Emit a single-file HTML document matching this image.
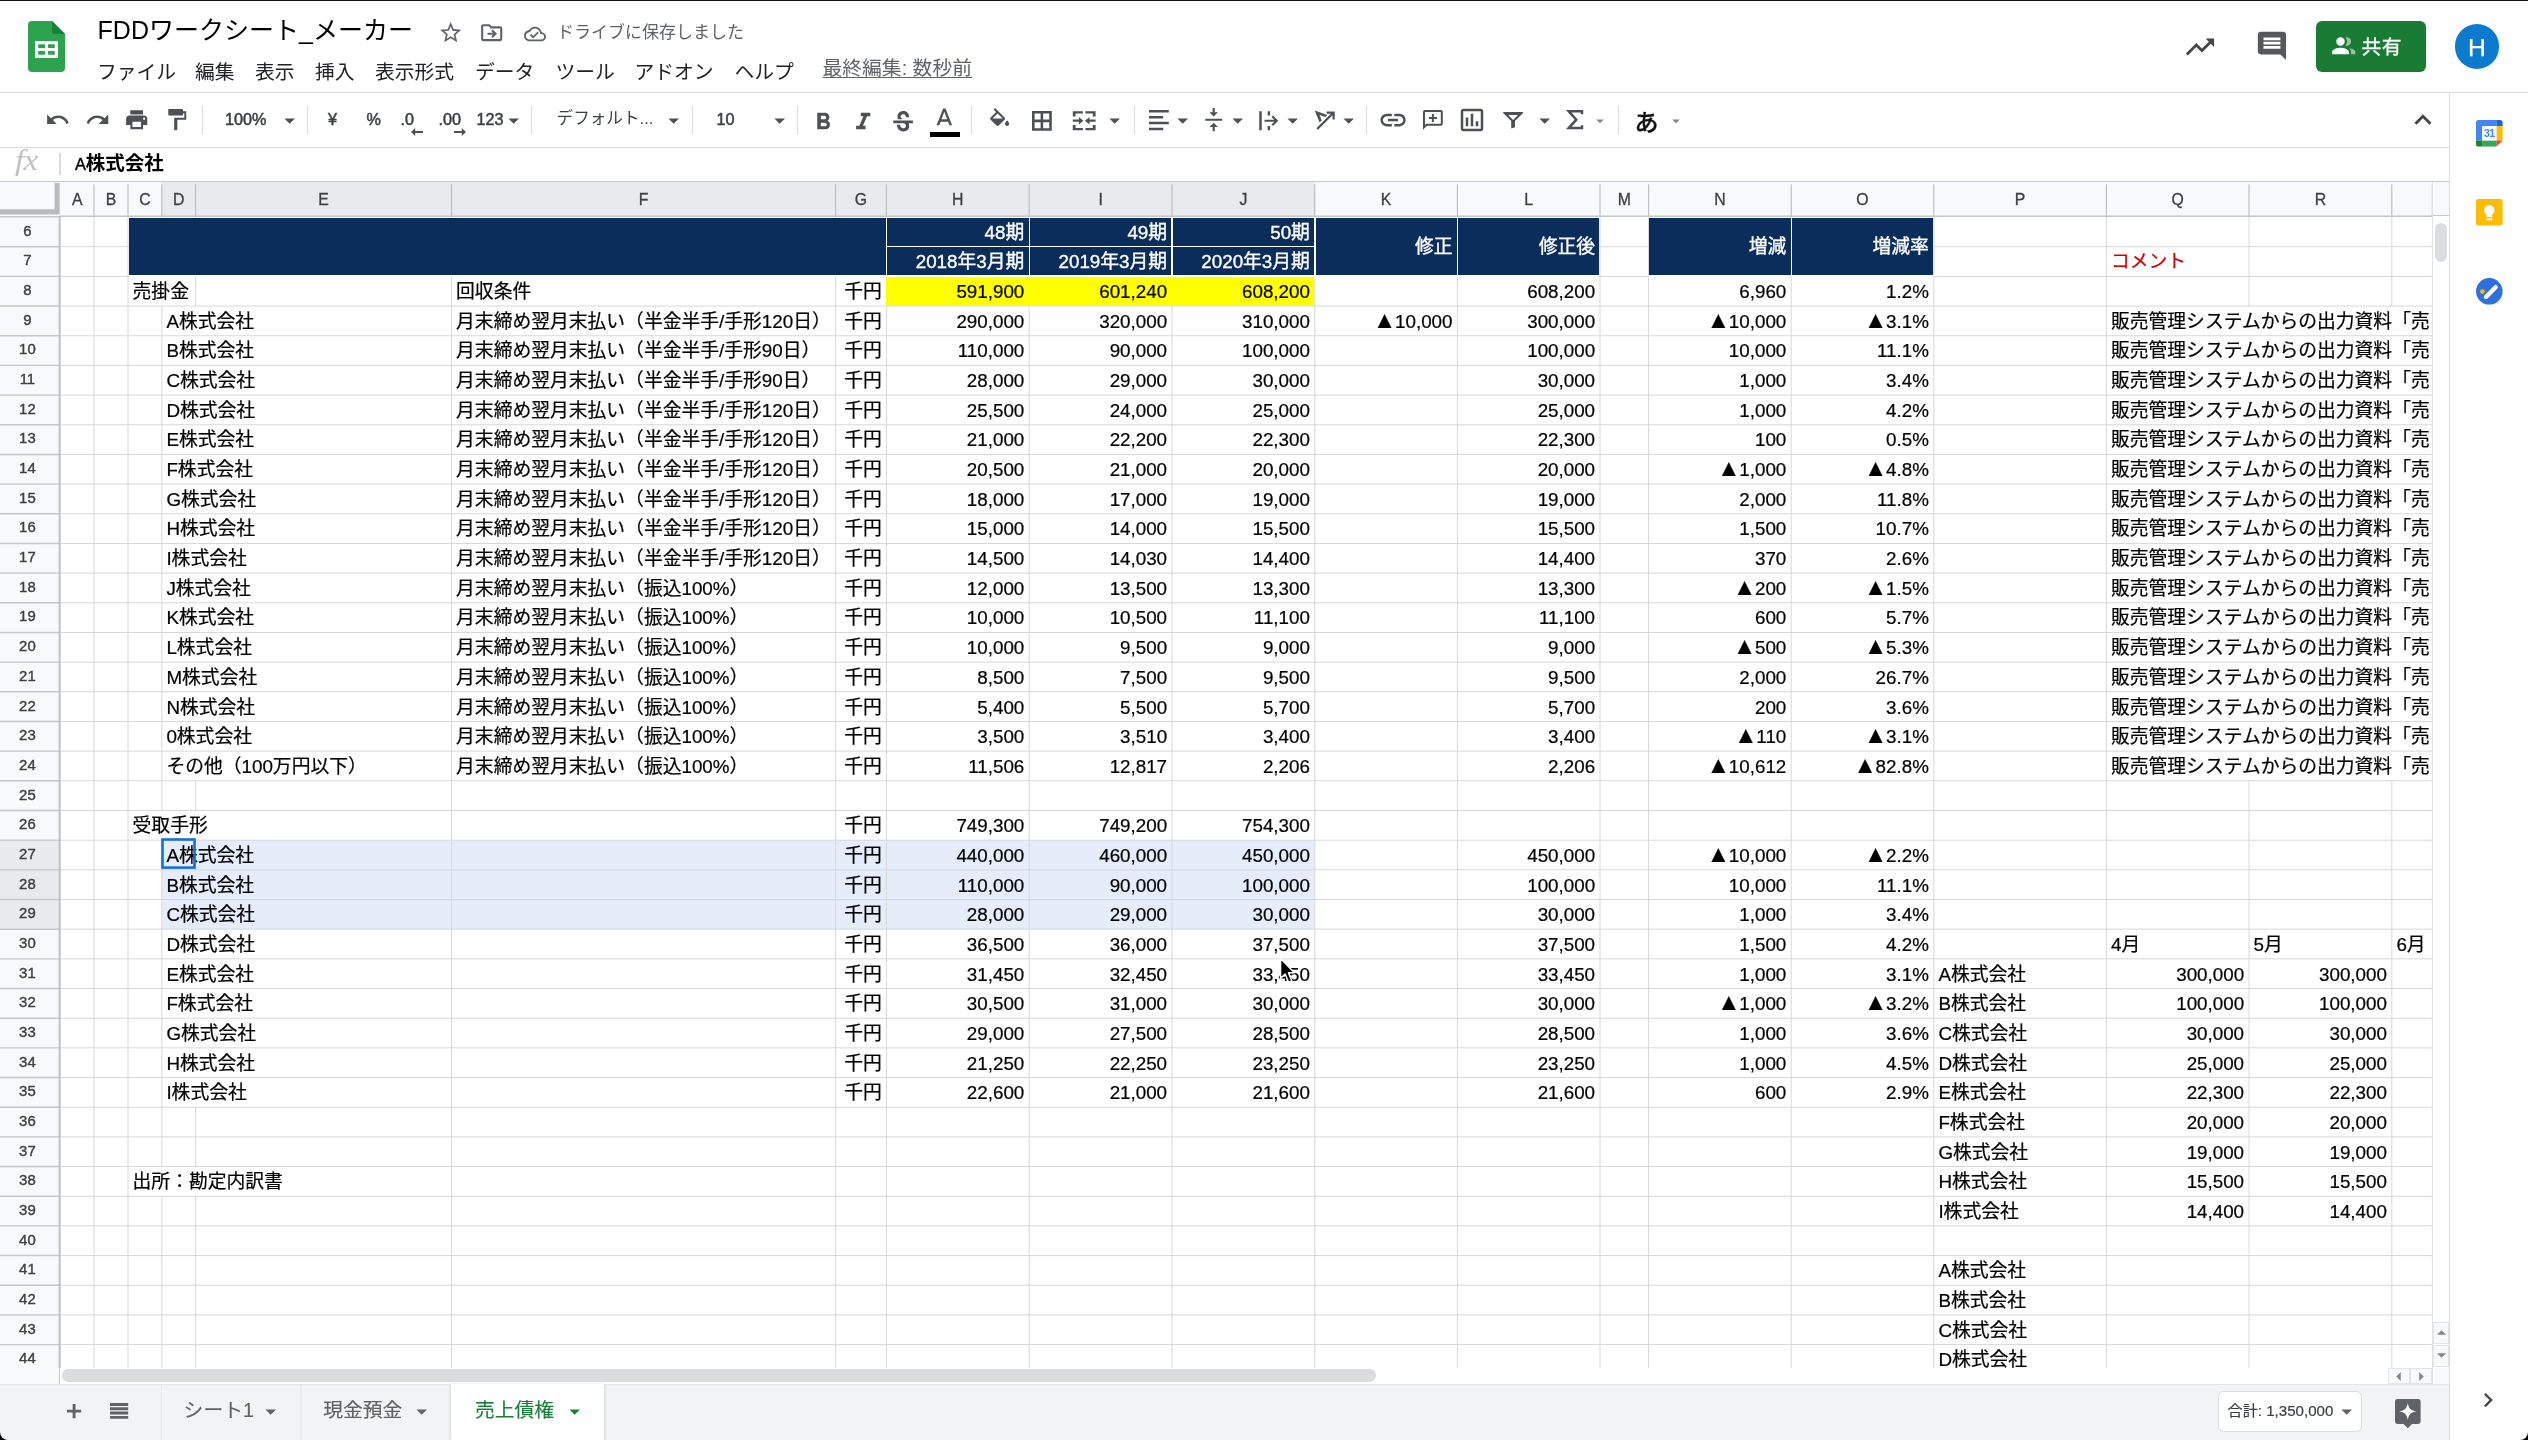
<!DOCTYPE html>
<html lang="ja"><head><meta charset="utf-8"><title>FDDワークシート_メーカー - Google スプレッドシート</title>
<style>
*{box-sizing:border-box;margin:0;padding:0}
html,body{width:2528px;height:1440px;overflow:hidden;background:#fff}
body{position:relative;font-family:"Liberation Sans","Noto Sans CJK JP",sans-serif;color:#000}
.abs,.c,.rh,.ch,.tb,.ic{position:absolute}
.c{white-space:nowrap;font-size:18.8px;line-height:29.66px;height:29.66px;overflow:hidden;-webkit-text-stroke:.22px currentColor}
.r{text-align:right}
.b{font-weight:bold}
.wh{color:#fff;-webkit-text-stroke:.35px #fff}
.t{font-size:23.4px;line-height:0;letter-spacing:-1.1px}
.md{-webkit-text-stroke:.45px currentColor}
.rh{left:0;width:54.8px;text-align:center;font-size:14.9px;color:#3c4043;-webkit-text-stroke:.38px #3c4043;line-height:29.66px;height:29.66px}
.ch{top:183.4px;height:33px;line-height:34px;text-align:center;font-size:15.8px;color:#3c4043;-webkit-text-stroke:.3px #3c4043}
.tb{font-size:16.2px;color:#3c4043;-webkit-text-stroke:.5px #3c4043;white-space:nowrap;line-height:24px;height:24px}
.sep{position:absolute;top:106px;height:28px;width:1.4px;background:#dadce0}
.menu{position:absolute;top:57.5px;font-size:19.8px;line-height:28px;color:#202124;white-space:nowrap}
svg{position:absolute;overflow:visible}
#app{position:absolute;left:0;top:0;width:2528px;height:1440px;will-change:transform}
</style></head><body><div id="app">
<div class="abs" style="left:0;top:0;width:2528px;height:1.4px;background:#111"></div>
<div class="abs" style="left:0;top:91.6px;width:2528px;height:1.4px;background:#dadce0"></div>
<svg style="left:28px;top:21px" width="37" height="51" viewBox="0 0 37 51"><path d="M4 0 H24 L37 13 V47 a4 4 0 0 1 -4 4 H4 a4 4 0 0 1 -4 -4 V4 a4 4 0 0 1 4 -4z" fill="#2da350"/><path d="M24 0 L37 13 H27 a3 3 0 0 1 -3 -3z" fill="#188038"/><path d="M7 20 H30 V37 H7z M10.2 23.2 V27 H17 V23.2z M20 23.2 V27 H26.8 V23.2z M10.2 30 V33.8 H17 V30z M20 30 V33.8 H26.8 V30z" fill="#fff" fill-rule="evenodd"/></svg>
<div class="abs" style="left:97.6px;top:12px;font-size:25px;line-height:36px;color:#000;white-space:nowrap">FDDワークシート_メーカー</div>
<svg style="left:437.80px;top:19.80px" width="25.40" height="25.40" viewBox="0 0 24 24"><path d="M22 9.24l-7.19-.62L12 2 9.19 8.63 2 9.24l5.46 4.73L5.82 21 12 17.27 18.18 21l-1.63-7.03L22 9.24zM12 15.4l-3.76 2.27 1-4.28-3.32-2.88 4.38-.38L12 6.1l1.71 4.04 4.38.38-3.32 2.88 1 4.28L12 15.4z" fill="#5f6368"/></svg>
<svg style="left:479.30px;top:19.80px" width="25.40" height="25.40" viewBox="0 0 24 24"><path d="M20 6h-8l-2-2H4c-1.1 0-2 .9-2 2v12c0 1.1.9 2 2 2h16c1.1 0 2-.9 2-2V8c0-1.1-.9-2-2-2zm0 12H4V6h5.17l2 2H20v10zM8 12v2h5.2l-1.6 1.6L13 17l4-4-4-4-1.4 1.4 1.6 1.6H8z" fill="#5f6368"/></svg>
<svg style="left:524.40px;top:22.60px" width="22.00" height="22.00" viewBox="0 0 24 24"><path d="M19.35 10.04C18.67 6.59 15.64 4 12 4 9.11 4 6.6 5.64 5.35 8.04 2.34 8.36 0 10.91 0 14c0 3.31 2.69 6 6 6h13c2.76 0 5-2.24 5-5 0-2.64-2.05-4.78-4.65-4.96zM19 18H6c-2.21 0-4-1.79-4-4 0-2.05 1.53-3.76 3.56-3.97l1.07-.11.5-.95C8.08 7.14 9.94 6 12 6c2.62 0 4.88 1.86 5.39 4.43l.3 1.5 1.53.11c1.56.1 2.78 1.41 2.78 2.96 0 1.65-1.35 3-3 3zm-9-3.82l-2.09-2.09L6.5 13.5 10 17l6.01-6.01-1.41-1.41z" fill="#5f6368"/></svg>
<div class="abs" style="left:557px;top:21.4px;font-size:17px;line-height:24px;color:#5f6368;white-space:nowrap">ドライブに保存しました</div>
<div class="menu" style="left:96.9px">ファイル</div>
<div class="menu" style="left:195px">編集</div>
<div class="menu" style="left:255px">表示</div>
<div class="menu" style="left:315px">挿入</div>
<div class="menu" style="left:375px">表示形式</div>
<div class="menu" style="left:475px">データ</div>
<div class="menu" style="left:555.5px">ツール</div>
<div class="menu" style="left:634.5px">アドオン</div>
<div class="menu" style="left:734.5px">ヘルプ</div>
<div class="menu" style="left:822.5px;top:53.5px;color:#5f6368;text-decoration:underline;text-underline-offset:2px">最終編集: 数秒前</div>
<svg style="left:2183.25px;top:29.75px" width="33.90" height="33.90" viewBox="0 0 24 24"><path d="M16 6l2.29 2.29-4.88 4.88-4-4L2 16.59 3.41 18l6-6 4 4 6.3-6.29L22 12V6z" fill="#444746"/></svg>
<svg style="left:2255.25px;top:29.45px" width="33.90" height="33.90" viewBox="0 0 24 24"><path d="M21.99 4c0-1.1-.89-2-1.99-2H4c-1.1 0-2 .9-2 2v12c0 1.1.9 2 2 2h14l4 4-.01-18zM18 14H6v-2h12v2zm0-3H6V9h12v2zm0-3H6V6h12v2z" fill="#55585d"/></svg>
<div class="abs" style="left:2316.2px;top:21.2px;width:109.8px;height:50.4px;border-radius:6px;background:#1a7b34"></div>
<svg style="left:2330.80px;top:33.30px" width="25.40" height="25.40" viewBox="0 0 24 24"><path d="M9 12c2.21 0 4-1.79 4-4s-1.79-4-4-4-4 1.79-4 4 1.79 4 4 4zm0 2c-2.67 0-8 1.34-8 4v2h16v-2c0-2.66-5.33-4-8-4z" fill="#fff"/><path d="M15 12c2.21 0 4-1.79 4-4s-1.79-4-4-4c-.47 0-.91.1-1.33.24a5.98 5.98 0 0 1 0 7.52c.42.14.86.24 1.33.24zm2.1 2.36C18.27 15.31 19 16.5 19 18v2h4v-2c0-2.02-3.08-3.26-5.9-3.64z" fill="#fff" fill-opacity=".55"/></svg>
<div class="abs" style="left:2361.6px;top:32.7px;font-size:19.8px;line-height:28px;color:#fff;-webkit-text-stroke:.3px #fff;white-space:nowrap;letter-spacing:.3px">共有</div>
<div class="abs" style="left:2454.6px;top:24.2px;width:44.8px;height:44.8px;border-radius:50%;background:#0b7bd0"></div>
<div class="abs" style="left:2454.6px;top:24.2px;width:44.8px;height:44.8px;line-height:47.8px;text-align:center;font-size:24.6px;-webkit-text-stroke:.25px #fff;color:#fff">H</div>
<div class="abs" style="left:0;top:146.6px;width:2449px;height:1.4px;background:#dadce0"></div>
<div class="abs" style="left:0;top:180.8px;width:2449px;height:1.8px;background:#c4c7c5"></div>
<div class="sep" style="left:202px"></div>
<div class="sep" style="left:306.5px"></div>
<div class="sep" style="left:531.1px"></div>
<div class="sep" style="left:692.1px"></div>
<div class="sep" style="left:796.6px"></div>
<div class="sep" style="left:970.5px"></div>
<div class="sep" style="left:1133.6px"></div>
<div class="sep" style="left:1366.1px"></div>
<div class="sep" style="left:1617.9px"></div>
<svg style="left:44.50px;top:107.30px" width="25.40" height="25.40" viewBox="0 0 24 24"><path d="M12.5 8c-2.65 0-5.05.99-6.9 2.6L2 7v9h9l-3.62-3.62c1.39-1.16 3.16-1.88 5.12-1.88 3.54 0 6.55 2.31 7.6 5.5l2.37-.78C21.08 11.03 17.15 8 12.5 8z" fill="#4d5156"/></svg>
<svg style="left:85.30px;top:107.30px" width="25.40" height="25.40" viewBox="0 0 24 24"><path d="M18.4 10.6C16.55 8.99 14.15 8 11.5 8c-4.65 0-8.58 3.03-9.96 7.22L3.9 16c1.05-3.19 4.05-5.5 7.6-5.5 1.95 0 3.73.72 5.12 1.88L13 16h9V7l-3.6 3.6z" fill="#4d5156"/></svg>
<svg style="left:124.30px;top:107.30px" width="25.40" height="25.40" viewBox="0 0 24 24"><path d="M19 8H5c-1.66 0-3 1.34-3 3v6h4v4h12v-4h4v-6c0-1.66-1.34-3-3-3zm-3 11H8v-5h8v5zm3-7c-.55 0-1-.45-1-1s.45-1 1-1 1 .45 1 1-.45 1-1 1zm-1-9H6v4h12V3z" fill="#4d5156"/></svg>
<svg style="left:163.90px;top:107.30px" width="25.40" height="25.40" viewBox="0 0 24 24"><path d="M18 4V3c0-.55-.45-1-1-1H5c-.55 0-1 .45-1 1v4c0 .55.45 1 1 1h12c.55 0 1-.45 1-1V6h1.200v4.200H9.600V21c0 .55.45 1 1 1h1c.55 0 1-.45 1-1v-9H21V4h-3z" fill="#4d5156"/></svg>
<div class="tb" style="left:225px;top:107px">100%</div>
<svg style="left:276.80px;top:108.10px" width="25.40" height="25.40" viewBox="0 0 24 24"><path d="M7 10l5 5 5-5z" fill="#4d5156"/></svg>
<div class="tb" style="left:328px;top:107px">¥</div>
<div class="tb" style="left:366.6px;top:107px">%</div>
<div class="tb" style="left:400.5px;top:107px">.0</div>
<div class="tb" style="left:438.6px;top:107px">.00</div>
<svg style="left:411px;top:127.6px" width="12" height="8" viewBox="0 0 12 8"><path d="M4.2 0 L0 4 L4.2 8 V5 H12 V3 H4.2Z" fill="#4d5156"/></svg>
<svg style="left:453.6px;top:127.6px" width="12" height="8" viewBox="0 0 12 8"><path d="M7.8 0 L12 4 L7.8 8 V5 H0 V3 H7.8Z" fill="#4d5156"/></svg>
<div class="tb" style="left:476.6px;top:107px">123</div>
<svg style="left:500.50px;top:108.10px" width="25.40" height="25.40" viewBox="0 0 24 24"><path d="M7 10l5 5 5-5z" fill="#4d5156"/></svg>
<div class="tb" style="left:556.6px;top:107px;-webkit-text-stroke:0;font-size:16.6px">デフォルト...</div>
<svg style="left:661.30px;top:108.10px" width="25.40" height="25.40" viewBox="0 0 24 24"><path d="M7 10l5 5 5-5z" fill="#4d5156"/></svg>
<div class="tb" style="left:716.4px;top:107px">10</div>
<svg style="left:767.30px;top:108.10px" width="25.40" height="25.40" viewBox="0 0 24 24"><path d="M7 10l5 5 5-5z" fill="#4d5156"/></svg>
<svg style="left:808.80px;top:107.60px" width="28.40" height="28.40" viewBox="0 0 24 24"><path d="M15.6 10.79c.97-.67 1.65-1.77 1.65-2.79 0-2.26-1.75-4-4-4H7v14h7.04c2.09 0 3.71-1.7 3.71-3.79 0-1.52-.86-2.82-2.15-3.42zM10 6.5h3c.83 0 1.5.67 1.5 1.5s-.67 1.5-1.5 1.5h-3v-3zm3.5 9H10v-3h3.5c.83 0 1.5.67 1.5 1.5s-.67 1.5-1.5 1.5z" fill="#4d5156"/></svg>
<svg style="left:848.80px;top:107.60px" width="28.40" height="28.40" viewBox="0 0 24 24"><path d="M10 4v3h2.21l-3.42 8H6v3h8v-3h-2.21l3.42-8H18V4z" fill="#4d5156"/></svg>
<svg style="left:889.6px;top:107.2px" width="26.2" height="32.6" viewBox="0 0 24 24" preserveAspectRatio="none"><path d="M7.24 8.75c-.26-.48-.39-1.03-.39-1.67 0-.61.13-1.16.4-1.67.26-.5.63-.93 1.11-1.29.48-.35 1.05-.63 1.7-.83.66-.19 1.39-.29 2.18-.29.81 0 1.54.11 2.21.34.66.22 1.23.54 1.69.94.47.4.83.88 1.08 1.43.25.55.38 1.15.38 1.81h-3.01c0-.31-.05-.59-.15-.85-.09-.27-.24-.49-.44-.68-.2-.19-.45-.33-.75-.44-.3-.1-.66-.16-1.06-.16-.39 0-.74.04-1.03.13-.29.09-.53.21-.72.36-.19.16-.34.34-.44.55-.1.21-.15.43-.15.66 0 .48.25.88.74 1.21.38.25.77.48 1.41.7H7.39c-.05-.08-.11-.17-.15-.25zM21 12v-2H3v2h9.62c.18.07.4.14.55.2.37.17.66.34.87.51.21.17.35.36.43.57.07.2.11.43.11.69 0 .23-.05.45-.14.66-.09.2-.23.38-.42.53-.19.15-.42.26-.71.35-.29.08-.63.13-1.01.13-.43 0-.83-.04-1.18-.13s-.66-.23-.91-.42c-.25-.19-.45-.44-.59-.75-.14-.31-.25-.76-.25-1.21H6.4c0 .55.08 1.13.24 1.58.16.45.37.85.65 1.21.28.35.6.66.98.92.37.26.78.48 1.22.65.44.17.9.3 1.38.39.48.08.96.13 1.44.13.8 0 1.53-.09 2.18-.28s1.21-.45 1.67-.79c.46-.34.82-.77 1.07-1.27s.38-1.07.38-1.71c0-.6-.1-1.14-.31-1.61-.05-.11-.11-.23-.17-.33H21z" fill="#4d5156"/></svg>
<svg style="left:929.65px;top:105.45px" width="28.70" height="28.70" viewBox="0 0 24 24"><path d="M11 3L5.5 17h2.25l1.12-3h6.25l1.12 3h2.25L13 3h-2zm-1.38 9L12 5.67 14.38 12H9.62z" fill="#4d5156"/></svg>
<div class="abs" style="left:930px;top:131.6px;width:29.6px;height:5.4px;background:#000"></div>
<svg style="left:986.50px;top:107.90px" width="25.40" height="25.40" viewBox="0 0 24 24"><path d="M16.56 8.94L7.62 0 6.21 1.41l2.38 2.38-5.15 5.15c-.59.59-.59 1.54 0 2.12l5.5 5.5c.29.29.68.44 1.06.44s.77-.15 1.06-.44l5.5-5.5c.59-.58.59-1.53 0-2.12zM5.21 10L10 5.21 14.79 10H5.21zM19 11.5s-2 2.17-2 3.5c0 1.1.9 2 2 2s2-.9 2-2c0-1.33-2-3.5-2-3.5z" fill="#4d5156"/></svg>
<svg style="left:1031.5px;top:110.5px" width="19.8" height="19.8" viewBox="0 0 19.8 19.8"><path d="M1.3 1.3 H18.5 V18.5 H1.3 Z M9.9 1.3 V18.5 M1.3 9.9 H18.5" stroke="#4d5156" stroke-width="2.6" fill="none"/></svg>
<svg style="left:1068.6px;top:107.5px" width="30.4" height="25.4" viewBox="0 0 24 24" preserveAspectRatio="none"><path d="M3 3h8v2.2H5.2V8H3V3zm10 0h8v5h-2.2V5.2H13V3zM3 16h2.2v2.800H11V21H3v-5zm15.800 0H21v5h-8v-2.200h5.800V16zM3 10.900h4.800V8.400l3.600 3.600-3.600 3.600v-2.500H3v-2.200zm18 0v2.200h-4.800v2.500L12.600 12l3.600-3.600v2.500H21z" fill="#4d5156"/></svg>
<svg style="left:1102.30px;top:108.10px" width="25.40" height="25.40" viewBox="0 0 24 24"><path d="M7 10l5 5 5-5z" fill="#4d5156"/></svg>
<svg style="left:1148.8px;top:109.9px" width="20" height="20.2" viewBox="0 0 20 20.2"><path d="M0 1.250 H19.8 M0 7.150 H14.2 M0 13.050 H19.8 M0 18.950 H14.2" stroke="#4d5156" stroke-width="2.5" fill="none"/></svg>
<svg style="left:1169.80px;top:108.10px" width="25.40" height="25.40" viewBox="0 0 24 24"><path d="M7 10l5 5 5-5z" fill="#4d5156"/></svg>
<svg style="left:1201.30px;top:107.30px" width="25.40" height="25.40" viewBox="0 0 24 24"><path d="M8 19h3v4h2v-4h3l-4-4-4 4zm8-14h-3V1h-2v4H8l4 4 4-4zM4 11v2h16v-2H4z" fill="#4d5156"/></svg>
<svg style="left:1225.10px;top:108.10px" width="25.40" height="25.40" viewBox="0 0 24 24"><path d="M7 10l5 5 5-5z" fill="#4d5156"/></svg>
<svg style="left:1254.70px;top:107.50px" width="25.40" height="25.40" viewBox="0 0 24 24"><path d="M4 3h2.4v18H4V3zm8 0h2.2v4H12V3zm0 14h2.2v4H12v-4zM9 11h9.2l-2.6-2.6L17 7l5 5-5 5-1.4-1.4 2.6-2.6H9v-2z" fill="#4d5156"/></svg>
<svg style="left:1280.10px;top:108.10px" width="25.40" height="25.40" viewBox="0 0 24 24"><path d="M7 10l5 5 5-5z" fill="#4d5156"/></svg>
<svg style="left:1312.30px;top:107.30px" width="25.40" height="25.40" viewBox="0 0 24 24"><path d="M2.6 3.2l11.8 4.3-1.9 1.9L7.2 7.5l1.9 5.3-1.9 1.9L2.6 3.2zM5.6 21.6l-1.5-1.5L17.9 6.3h-4.1V4.2h7.7v7.7h-2.1V7.8L5.6 21.6z" fill="#4d5156"/></svg>
<svg style="left:1335.60px;top:108.10px" width="25.40" height="25.40" viewBox="0 0 24 24"><path d="M7 10l5 5 5-5z" fill="#4d5156"/></svg>
<svg style="left:1377.90px;top:104.90px" width="30.20" height="30.20" viewBox="0 0 24 24"><path d="M3.9 12c0-1.71 1.39-3.1 3.1-3.1h4V7H7c-2.76 0-5 2.24-5 5s2.24 5 5 5h4v-1.9H7c-1.71 0-3.1-1.39-3.1-3.1zM8 13h8v-2H8v2zm9-6h-4v1.9h4c1.71 0 3.1 1.39 3.1 3.1s-1.39 3.1-3.1 3.1h-4V17h4c2.76 0 5-2.24 5-5s-2.24-5-5-5z" fill="#4d5156"/></svg>
<svg style="left:1420.80px;top:107.90px" width="23.80" height="23.80" viewBox="0 0 24 24"><path d="M20 2H4c-1.1 0-2 .9-2 2v18l4-4h14c1.1 0 2-.9 2-2V4c0-1.1-.9-2-2-2zm0 14H5.17L4 17.17V4h16v12zM11 14h2v-3h3V9h-3V6h-2v3H8v2h3v3z" fill="#4d5156"/></svg>
<svg style="left:1457.30px;top:105.00px" width="30.00" height="30.00" viewBox="0 0 24 24"><path d="M9 17H7v-7h2v7zm4 0h-2V7h2v10zm4 0h-2v-4h2v4zm2 2H5V5h14v14zm0-16H5c-1.1 0-2 .9-2 2v14c0 1.1.9 2 2 2h14c1.1 0 2-.9 2-2V5c0-1.1-.9-2-2-2z" fill="#4d5156"/></svg>
<svg style="left:1503.2px;top:111.7px" width="20.2" height="16.4" viewBox="0 0 20.2 16.4"><path d="M0.6 0 H19.6 a.6 .6 0 0 1 .45 1 L12 9.1 V15.2 L8.2 16.4 V9.100 L0.150 1 A.6 .6 0 0 1 .6 0z M5.200 3 H15 L10.100 7.900z" fill="#4d5156" fill-rule="evenodd"/></svg>
<svg style="left:1531.70px;top:108.10px" width="25.40" height="25.40" viewBox="0 0 24 24"><path d="M7 10l5 5 5-5z" fill="#4d5156"/></svg>
<svg style="left:1567.2px;top:110.4px" width="16.2" height="19.4" viewBox="0 0 16.2 19.4"><path d="M15 4.200 V1.300 H1.700 L9.300 9.700 L1.700 18.100 H15 V15.200" stroke="#4d5156" stroke-width="2.5" fill="none" stroke-linejoin="miter"/></svg>
<svg style="left:1591.00px;top:111.80px" width="18.00" height="18.00" viewBox="0 0 24 24"><path d="M7 10l5 5 5-5z" fill="#80868b"/></svg>
<div class="abs" style="left:1634.6px;top:107.4px;font-size:24px;line-height:32px;font-weight:500;-webkit-text-stroke:.3px #111;color:#111">あ</div>
<svg style="left:1667.30px;top:111.80px" width="18.00" height="18.00" viewBox="0 0 24 24"><path d="M7 10l5 5 5-5z" fill="#80868b"/></svg>
<svg style="left:2406.05px;top:103.05px" width="33.90" height="33.90" viewBox="0 0 24 24"><path d="M12 8l-6 6 1.41 1.41L12 10.83l4.59 4.58L18 14z" fill="#444746"/></svg>
<div class="abs" style="left:14.6px;top:143.4px;font-family:'Liberation Serif',serif;font-style:italic;font-size:29.5px;line-height:34px;color:#bfc1c4;letter-spacing:-.6px;transform:scaleX(1.12);transform-origin:0 0">fx</div>
<div class="abs" style="left:59.4px;top:153px;width:1.4px;height:22px;background:#dadce0"></div>
<div class="abs" style="left:75px;top:148px;font-size:19.5px;line-height:30px;font-weight:bold;color:#000;white-space:nowrap"><span style="font-weight:normal;-webkit-text-stroke:.4px #000;font-size:16.4px;letter-spacing:-.2px">A</span>株式会社</div>
<div class="abs" style="left:0;top:182px;width:2449px;height:1186px;overflow:hidden">
<div class="abs" style="left:0;top:-182px;width:2449px;height:1440px">
<div class="abs" style="left:0;top:182px;width:2449px;height:34.6px;background:#f8f9fa"></div>
<div class="abs" style="left:161.8px;top:182px;width:1153px;height:34.6px;background:#e8eaed"></div>
<div class="abs" style="left:0;top:216px;width:60.4px;height:1168px;background:#f8f9fa"></div>
<div class="abs" style="left:0;top:840.16px;width:60.4px;height:89.02px;background:#e8eaed"></div>
<div class="abs" style="left:161.8px;top:840.16px;width:1153px;height:89.02px;background:#e5edfb"></div>
<svg style="left:0;top:0" width="2449" height="1440" viewBox="0 0 2449 1440">
<path d="M60.4 246.72 H2432.4 M60.4 276.39 H2432.4 M60.4 306.07 H2432.4 M60.4 335.74 H2432.4 M60.4 365.41 H2432.4 M60.4 395.08 H2432.4 M60.4 424.75 H2432.4 M60.4 454.43 H2432.4 M60.4 484.1 H2432.4 M60.4 513.77 H2432.4 M60.4 543.44 H2432.4 M60.4 573.11 H2432.4 M60.4 602.79 H2432.4 M60.4 632.46 H2432.4 M60.4 662.13 H2432.4 M60.4 691.8 H2432.4 M60.4 721.47 H2432.4 M60.4 751.15 H2432.4 M60.4 780.82 H2432.4 M60.4 810.49 H2432.4 M60.4 840.16 H2432.4 M60.4 869.83 H2432.4 M60.4 899.51 H2432.4 M60.4 929.18 H2432.4 M60.4 958.85 H2432.4 M60.4 988.52 H2432.4 M60.4 1018.19 H2432.4 M60.4 1047.87 H2432.4 M60.4 1077.54 H2432.4 M60.4 1107.21 H2432.4 M60.4 1136.88 H2432.4 M60.4 1166.55 H2432.4 M60.4 1196.23 H2432.4 M60.4 1225.9 H2432.4 M60.4 1255.57 H2432.4 M60.4 1285.24 H2432.4 M60.4 1314.91 H2432.4 M60.4 1344.59 H2432.4 M60.4 1374.26 H2432.4" stroke="#d7d8d9" stroke-width="1" fill="none"/>
<path d="M94 217.05 V1374.26 M128 217.05 V1374.26 M161.8 217.05 V276.39 M161.8 306.07 V810.49 M161.8 840.16 V1166.55 M161.8 1196.23 V1374.26 M195.6 217.05 V306.07 M195.6 780.82 V810.49 M195.6 1107.21 V1166.55 M195.6 1196.23 V1374.26 M451.5 217.05 V1374.26 M835.6 217.05 V1374.26 M886.4 217.05 V1374.26 M1029.2 217.05 V1374.26 M1172 217.05 V1374.26 M1314.8 217.05 V1374.26 M1457.4 217.05 V1374.26 M1600 217.05 V1374.26 M1648.6 217.05 V1374.26 M1791.2 217.05 V1374.26 M1933.8 217.05 V1374.26 M2106.4 217.05 V1374.26 M2249 217.05 V306.07 M2249 780.82 V1374.26 M2391.8 217.05 V306.07 M2391.8 780.82 V1374.26 M2432.4 217.05 V1374.26" stroke="#d7d8d9" stroke-width="1" fill="none"/>
</svg>
<div class="abs" style="left:128.7px;top:217.75px;width:1470.7px;height:59.39px;background:#fff"></div>
<div class="abs" style="left:1649.2px;top:217.75px;width:284px;height:59.39px;background:#fff"></div>
<div class="abs" style="left:886.4px;top:276.69px;width:427.9px;height:28.97px;background:#ffff00"></div>
<div class="abs" style="left:128.7px;top:217.75px;width:757.7px;height:57.74px;background:#0b2d5b"></div>
<div class="abs" style="left:887px;top:217.75px;width:141.65px;height:28.42px;background:#0b2d5b"></div>
<div class="abs" style="left:887px;top:247.27px;width:141.65px;height:28.22px;background:#0b2d5b"></div>
<div class="abs" style="left:1029.8px;top:217.75px;width:141.65px;height:28.42px;background:#0b2d5b"></div>
<div class="abs" style="left:1029.8px;top:247.27px;width:141.65px;height:28.22px;background:#0b2d5b"></div>
<div class="abs" style="left:1172.6px;top:217.75px;width:141.65px;height:28.42px;background:#0b2d5b"></div>
<div class="abs" style="left:1172.6px;top:247.27px;width:141.65px;height:28.22px;background:#0b2d5b"></div>
<div class="abs" style="left:1315.6px;top:217.75px;width:141.25px;height:57.74px;background:#0b2d5b"></div>
<div class="abs" style="left:1458px;top:217.75px;width:141.4px;height:57.74px;background:#0b2d5b"></div>
<div class="abs" style="left:1649.2px;top:217.75px;width:141.45px;height:57.74px;background:#0b2d5b"></div>
<div class="abs" style="left:1791.8px;top:217.75px;width:141.4px;height:57.74px;background:#0b2d5b"></div>
<svg style="left:0;top:0" width="2449" height="1440" viewBox="0 0 2449 1440">
<path d="M94 184.2 V216.4 M128 184.2 V216.4 M161.8 184.2 V216.4 M195.6 184.2 V216.4 M451.5 184.2 V216.4 M835.6 184.2 V216.4 M886.4 184.2 V216.4 M1029.2 184.2 V216.4 M1172 184.2 V216.4 M1314.8 184.2 V216.4 M1457.4 184.2 V216.4 M1600 184.2 V216.4 M1648.6 184.2 V216.4 M1791.2 184.2 V216.4 M1933.8 184.2 V216.4 M2106.4 184.2 V216.4 M2249 184.2 V216.4 M2391.8 184.2 V216.4 M2432.4 184.2 V216.4" stroke="#bbbdbf" stroke-width="1.15" fill="none"/>
<path d="M0 246.72 H59 M0 276.39 H59 M0 306.07 H59 M0 335.74 H59 M0 365.41 H59 M0 395.08 H59 M0 424.75 H59 M0 454.43 H59 M0 484.1 H59 M0 513.77 H59 M0 543.44 H59 M0 573.11 H59 M0 602.79 H59 M0 632.46 H59 M0 662.13 H59 M0 691.8 H59 M0 721.47 H59 M0 751.15 H59 M0 780.82 H59 M0 810.49 H59 M0 840.16 H59 M0 869.83 H59 M0 899.51 H59 M0 929.18 H59 M0 958.85 H59 M0 988.52 H59 M0 1018.19 H59 M0 1047.87 H59 M0 1077.54 H59 M0 1107.21 H59 M0 1136.88 H59 M0 1166.55 H59 M0 1196.23 H59 M0 1225.9 H59 M0 1255.57 H59 M0 1285.24 H59 M0 1314.91 H59 M0 1344.59 H59 M0 1374.26 H59" stroke="#c4c7c5" stroke-width="1.4" fill="none"/>
<path d="M60 216.3 H2432.4" stroke="#c4c7c5" stroke-width="1.4" fill="none"/>
<path d="M57.1 183 V214.5 M0 211.9 H59.6" stroke="#b9bbbe" stroke-width="5.1" fill="none"/>
<path d="M0 216.7 H60" stroke="#c4c7c5" stroke-width="1.4" fill="none"/>
<path d="M59.7 216 V1440" stroke="#bcbec1" stroke-width="1.9" fill="none"/>
</svg>
<div class="ch" style="left:60.4px;width:33.6px">A</div>
<div class="ch" style="left:94px;width:34px">B</div>
<div class="ch" style="left:128px;width:33.8px">C</div>
<div class="ch" style="left:161.8px;width:33.8px">D</div>
<div class="ch" style="left:195.6px;width:255.9px">E</div>
<div class="ch" style="left:451.5px;width:384.1px">F</div>
<div class="ch" style="left:835.6px;width:50.8px">G</div>
<div class="ch" style="left:886.4px;width:142.8px">H</div>
<div class="ch" style="left:1029.2px;width:142.8px">I</div>
<div class="ch" style="left:1172px;width:142.8px">J</div>
<div class="ch" style="left:1314.8px;width:142.6px">K</div>
<div class="ch" style="left:1457.4px;width:142.6px">L</div>
<div class="ch" style="left:1600px;width:48.6px">M</div>
<div class="ch" style="left:1648.6px;width:142.6px">N</div>
<div class="ch" style="left:1791.2px;width:142.6px">O</div>
<div class="ch" style="left:1933.8px;width:172.6px">P</div>
<div class="ch" style="left:2106.4px;width:142.6px">Q</div>
<div class="ch" style="left:2249px;width:142.8px">R</div>
<div class="rh" style="top:216.75px">6</div>
<div class="rh" style="top:246.42px">7</div>
<div class="rh" style="top:276.09px">8</div>
<div class="rh" style="top:305.77px">9</div>
<div class="rh" style="top:335.44px">10</div>
<div class="rh" style="top:365.11px">11</div>
<div class="rh" style="top:394.78px">12</div>
<div class="rh" style="top:424.45px">13</div>
<div class="rh" style="top:454.13px">14</div>
<div class="rh" style="top:483.8px">15</div>
<div class="rh" style="top:513.47px">16</div>
<div class="rh" style="top:543.14px">17</div>
<div class="rh" style="top:572.81px">18</div>
<div class="rh" style="top:602.49px">19</div>
<div class="rh" style="top:632.16px">20</div>
<div class="rh" style="top:661.83px">21</div>
<div class="rh" style="top:691.5px">22</div>
<div class="rh" style="top:721.17px">23</div>
<div class="rh" style="top:750.85px">24</div>
<div class="rh" style="top:780.52px">25</div>
<div class="rh" style="top:810.19px">26</div>
<div class="rh" style="top:839.86px">27</div>
<div class="rh" style="top:869.53px">28</div>
<div class="rh" style="top:899.21px">29</div>
<div class="rh" style="top:928.88px">30</div>
<div class="rh" style="top:958.55px">31</div>
<div class="rh" style="top:988.22px">32</div>
<div class="rh" style="top:1017.89px">33</div>
<div class="rh" style="top:1047.57px">34</div>
<div class="rh" style="top:1077.24px">35</div>
<div class="rh" style="top:1106.91px">36</div>
<div class="rh" style="top:1136.58px">37</div>
<div class="rh" style="top:1166.25px">38</div>
<div class="rh" style="top:1195.93px">39</div>
<div class="rh" style="top:1225.6px">40</div>
<div class="rh" style="top:1255.27px">41</div>
<div class="rh" style="top:1284.94px">42</div>
<div class="rh" style="top:1314.61px">43</div>
<div class="rh" style="top:1344.29px">44</div>
<div class="c r wh" style="left:886.4px;top:217.75px;width:137.9px">48期</div>
<div class="c r wh" style="left:1029.2px;top:217.75px;width:137.9px">49期</div>
<div class="c r wh" style="left:1172px;top:217.75px;width:137.9px">50期</div>
<div class="c r wh" style="left:886.4px;top:247.42px;width:137.9px">2018年3月期</div>
<div class="c r wh" style="left:1029.2px;top:247.42px;width:137.9px">2019年3月期</div>
<div class="c r wh" style="left:1172px;top:247.42px;width:137.9px">2020年3月期</div>
<div class="c r wh" style="left:1314.8px;top:231.59px;width:137.7px">修正</div>
<div class="c r wh" style="left:1457.4px;top:231.59px;width:137.7px">修正後</div>
<div class="c r wh" style="left:1648.6px;top:231.59px;width:137.7px">増減</div>
<div class="c r wh" style="left:1791.2px;top:231.59px;width:137.7px">増減率</div>
<div class="c" style="left:2111px;top:247.42px;width:137px;color:#cc0000">コメント</div>
<div class="c" style="left:132.6px;top:277.09px;width:62px">売掛金</div>
<div class="c" style="left:456.1px;top:277.09px;width:378.5px">回収条件</div>
<div class="c" style="left:840.2px;top:277.09px;width:45.2px;left:844.2px">千円</div>
<div class="c r" style="left:886.4px;top:277.09px;width:137.9px">591,900</div>
<div class="c r" style="left:1029.2px;top:277.09px;width:137.9px">601,240</div>
<div class="c r" style="left:1172px;top:277.09px;width:137.9px">608,200</div>
<div class="c r" style="left:1457.4px;top:277.09px;width:137.7px">608,200</div>
<div class="c r" style="left:1648.6px;top:277.09px;width:137.7px">6,960</div>
<div class="c r" style="left:1791.2px;top:277.09px;width:137.7px">1.2%</div>
<div class="c" style="left:166.4px;top:306.77px;width:284.1px">A株式会社</div>
<div class="c" style="left:456.1px;top:306.77px;width:378.5px">月末締め翌月末払い（半金半手/手形120日）</div>
<div class="c" style="left:840.2px;top:306.77px;width:45.2px;left:844.2px">千円</div>
<div class="c r" style="left:886.4px;top:306.77px;width:137.9px">290,000</div>
<div class="c r" style="left:1029.2px;top:306.77px;width:137.9px">320,000</div>
<div class="c r" style="left:1172px;top:306.77px;width:137.9px">310,000</div>
<div class="c r" style="left:1314.8px;top:306.77px;width:137.7px"><span class="t">▲</span>10,000</div>
<div class="c r" style="left:1457.4px;top:306.77px;width:137.7px">300,000</div>
<div class="c r" style="left:1648.6px;top:306.77px;width:137.7px"><span class="t">▲</span>10,000</div>
<div class="c r" style="left:1791.2px;top:306.77px;width:137.7px"><span class="t">▲</span>3.1%</div>
<div class="c" style="left:2111px;top:306.77px;width:320.4px;width:318px">販売管理システムからの出力資料「売掛金残高一覧表」より作成</div>
<div class="c" style="left:166.4px;top:336.44px;width:284.1px">B株式会社</div>
<div class="c" style="left:456.1px;top:336.44px;width:378.5px">月末締め翌月末払い（半金半手/手形90日）</div>
<div class="c" style="left:840.2px;top:336.44px;width:45.2px;left:844.2px">千円</div>
<div class="c r" style="left:886.4px;top:336.44px;width:137.9px">110,000</div>
<div class="c r" style="left:1029.2px;top:336.44px;width:137.9px">90,000</div>
<div class="c r" style="left:1172px;top:336.44px;width:137.9px">100,000</div>
<div class="c r" style="left:1457.4px;top:336.44px;width:137.7px">100,000</div>
<div class="c r" style="left:1648.6px;top:336.44px;width:137.7px">10,000</div>
<div class="c r" style="left:1791.2px;top:336.44px;width:137.7px">11.1%</div>
<div class="c" style="left:2111px;top:336.44px;width:320.4px;width:318px">販売管理システムからの出力資料「売掛金残高一覧表」より作成</div>
<div class="c" style="left:166.4px;top:366.11px;width:284.1px">C株式会社</div>
<div class="c" style="left:456.1px;top:366.11px;width:378.5px">月末締め翌月末払い（半金半手/手形90日）</div>
<div class="c" style="left:840.2px;top:366.11px;width:45.2px;left:844.2px">千円</div>
<div class="c r" style="left:886.4px;top:366.11px;width:137.9px">28,000</div>
<div class="c r" style="left:1029.2px;top:366.11px;width:137.9px">29,000</div>
<div class="c r" style="left:1172px;top:366.11px;width:137.9px">30,000</div>
<div class="c r" style="left:1457.4px;top:366.11px;width:137.7px">30,000</div>
<div class="c r" style="left:1648.6px;top:366.11px;width:137.7px">1,000</div>
<div class="c r" style="left:1791.2px;top:366.11px;width:137.7px">3.4%</div>
<div class="c" style="left:2111px;top:366.11px;width:320.4px;width:318px">販売管理システムからの出力資料「売掛金残高一覧表」より作成</div>
<div class="c" style="left:166.4px;top:395.78px;width:284.1px">D株式会社</div>
<div class="c" style="left:456.1px;top:395.78px;width:378.5px">月末締め翌月末払い（半金半手/手形120日）</div>
<div class="c" style="left:840.2px;top:395.78px;width:45.2px;left:844.2px">千円</div>
<div class="c r" style="left:886.4px;top:395.78px;width:137.9px">25,500</div>
<div class="c r" style="left:1029.2px;top:395.78px;width:137.9px">24,000</div>
<div class="c r" style="left:1172px;top:395.78px;width:137.9px">25,000</div>
<div class="c r" style="left:1457.4px;top:395.78px;width:137.7px">25,000</div>
<div class="c r" style="left:1648.6px;top:395.78px;width:137.7px">1,000</div>
<div class="c r" style="left:1791.2px;top:395.78px;width:137.7px">4.2%</div>
<div class="c" style="left:2111px;top:395.78px;width:320.4px;width:318px">販売管理システムからの出力資料「売掛金残高一覧表」より作成</div>
<div class="c" style="left:166.4px;top:425.45px;width:284.1px">E株式会社</div>
<div class="c" style="left:456.1px;top:425.45px;width:378.5px">月末締め翌月末払い（半金半手/手形120日）</div>
<div class="c" style="left:840.2px;top:425.45px;width:45.2px;left:844.2px">千円</div>
<div class="c r" style="left:886.4px;top:425.45px;width:137.9px">21,000</div>
<div class="c r" style="left:1029.2px;top:425.45px;width:137.9px">22,200</div>
<div class="c r" style="left:1172px;top:425.45px;width:137.9px">22,300</div>
<div class="c r" style="left:1457.4px;top:425.45px;width:137.7px">22,300</div>
<div class="c r" style="left:1648.6px;top:425.45px;width:137.7px">100</div>
<div class="c r" style="left:1791.2px;top:425.45px;width:137.7px">0.5%</div>
<div class="c" style="left:2111px;top:425.45px;width:320.4px;width:318px">販売管理システムからの出力資料「売掛金残高一覧表」より作成</div>
<div class="c" style="left:166.4px;top:455.13px;width:284.1px">F株式会社</div>
<div class="c" style="left:456.1px;top:455.13px;width:378.5px">月末締め翌月末払い（半金半手/手形120日）</div>
<div class="c" style="left:840.2px;top:455.13px;width:45.2px;left:844.2px">千円</div>
<div class="c r" style="left:886.4px;top:455.13px;width:137.9px">20,500</div>
<div class="c r" style="left:1029.2px;top:455.13px;width:137.9px">21,000</div>
<div class="c r" style="left:1172px;top:455.13px;width:137.9px">20,000</div>
<div class="c r" style="left:1457.4px;top:455.13px;width:137.7px">20,000</div>
<div class="c r" style="left:1648.6px;top:455.13px;width:137.7px"><span class="t">▲</span>1,000</div>
<div class="c r" style="left:1791.2px;top:455.13px;width:137.7px"><span class="t">▲</span>4.8%</div>
<div class="c" style="left:2111px;top:455.13px;width:320.4px;width:318px">販売管理システムからの出力資料「売掛金残高一覧表」より作成</div>
<div class="c" style="left:166.4px;top:484.8px;width:284.1px">G株式会社</div>
<div class="c" style="left:456.1px;top:484.8px;width:378.5px">月末締め翌月末払い（半金半手/手形120日）</div>
<div class="c" style="left:840.2px;top:484.8px;width:45.2px;left:844.2px">千円</div>
<div class="c r" style="left:886.4px;top:484.8px;width:137.9px">18,000</div>
<div class="c r" style="left:1029.2px;top:484.8px;width:137.9px">17,000</div>
<div class="c r" style="left:1172px;top:484.8px;width:137.9px">19,000</div>
<div class="c r" style="left:1457.4px;top:484.8px;width:137.7px">19,000</div>
<div class="c r" style="left:1648.6px;top:484.8px;width:137.7px">2,000</div>
<div class="c r" style="left:1791.2px;top:484.8px;width:137.7px">11.8%</div>
<div class="c" style="left:2111px;top:484.8px;width:320.4px;width:318px">販売管理システムからの出力資料「売掛金残高一覧表」より作成</div>
<div class="c" style="left:166.4px;top:514.47px;width:284.1px">H株式会社</div>
<div class="c" style="left:456.1px;top:514.47px;width:378.5px">月末締め翌月末払い（半金半手/手形120日）</div>
<div class="c" style="left:840.2px;top:514.47px;width:45.2px;left:844.2px">千円</div>
<div class="c r" style="left:886.4px;top:514.47px;width:137.9px">15,000</div>
<div class="c r" style="left:1029.2px;top:514.47px;width:137.9px">14,000</div>
<div class="c r" style="left:1172px;top:514.47px;width:137.9px">15,500</div>
<div class="c r" style="left:1457.4px;top:514.47px;width:137.7px">15,500</div>
<div class="c r" style="left:1648.6px;top:514.47px;width:137.7px">1,500</div>
<div class="c r" style="left:1791.2px;top:514.47px;width:137.7px">10.7%</div>
<div class="c" style="left:2111px;top:514.47px;width:320.4px;width:318px">販売管理システムからの出力資料「売掛金残高一覧表」より作成</div>
<div class="c" style="left:166.4px;top:544.14px;width:284.1px">I株式会社</div>
<div class="c" style="left:456.1px;top:544.14px;width:378.5px">月末締め翌月末払い（半金半手/手形120日）</div>
<div class="c" style="left:840.2px;top:544.14px;width:45.2px;left:844.2px">千円</div>
<div class="c r" style="left:886.4px;top:544.14px;width:137.9px">14,500</div>
<div class="c r" style="left:1029.2px;top:544.14px;width:137.9px">14,030</div>
<div class="c r" style="left:1172px;top:544.14px;width:137.9px">14,400</div>
<div class="c r" style="left:1457.4px;top:544.14px;width:137.7px">14,400</div>
<div class="c r" style="left:1648.6px;top:544.14px;width:137.7px">370</div>
<div class="c r" style="left:1791.2px;top:544.14px;width:137.7px">2.6%</div>
<div class="c" style="left:2111px;top:544.14px;width:320.4px;width:318px">販売管理システムからの出力資料「売掛金残高一覧表」より作成</div>
<div class="c" style="left:166.4px;top:573.81px;width:284.1px">J株式会社</div>
<div class="c" style="left:456.1px;top:573.81px;width:378.5px">月末締め翌月末払い（振込100%）</div>
<div class="c" style="left:840.2px;top:573.81px;width:45.2px;left:844.2px">千円</div>
<div class="c r" style="left:886.4px;top:573.81px;width:137.9px">12,000</div>
<div class="c r" style="left:1029.2px;top:573.81px;width:137.9px">13,500</div>
<div class="c r" style="left:1172px;top:573.81px;width:137.9px">13,300</div>
<div class="c r" style="left:1457.4px;top:573.81px;width:137.7px">13,300</div>
<div class="c r" style="left:1648.6px;top:573.81px;width:137.7px"><span class="t">▲</span>200</div>
<div class="c r" style="left:1791.2px;top:573.81px;width:137.7px"><span class="t">▲</span>1.5%</div>
<div class="c" style="left:2111px;top:573.81px;width:320.4px;width:318px">販売管理システムからの出力資料「売掛金残高一覧表」より作成</div>
<div class="c" style="left:166.4px;top:603.49px;width:284.1px">K株式会社</div>
<div class="c" style="left:456.1px;top:603.49px;width:378.5px">月末締め翌月末払い（振込100%）</div>
<div class="c" style="left:840.2px;top:603.49px;width:45.2px;left:844.2px">千円</div>
<div class="c r" style="left:886.4px;top:603.49px;width:137.9px">10,000</div>
<div class="c r" style="left:1029.2px;top:603.49px;width:137.9px">10,500</div>
<div class="c r" style="left:1172px;top:603.49px;width:137.9px">11,100</div>
<div class="c r" style="left:1457.4px;top:603.49px;width:137.7px">11,100</div>
<div class="c r" style="left:1648.6px;top:603.49px;width:137.7px">600</div>
<div class="c r" style="left:1791.2px;top:603.49px;width:137.7px">5.7%</div>
<div class="c" style="left:2111px;top:603.49px;width:320.4px;width:318px">販売管理システムからの出力資料「売掛金残高一覧表」より作成</div>
<div class="c" style="left:166.4px;top:633.16px;width:284.1px">L株式会社</div>
<div class="c" style="left:456.1px;top:633.16px;width:378.5px">月末締め翌月末払い（振込100%）</div>
<div class="c" style="left:840.2px;top:633.16px;width:45.2px;left:844.2px">千円</div>
<div class="c r" style="left:886.4px;top:633.16px;width:137.9px">10,000</div>
<div class="c r" style="left:1029.2px;top:633.16px;width:137.9px">9,500</div>
<div class="c r" style="left:1172px;top:633.16px;width:137.9px">9,000</div>
<div class="c r" style="left:1457.4px;top:633.16px;width:137.7px">9,000</div>
<div class="c r" style="left:1648.6px;top:633.16px;width:137.7px"><span class="t">▲</span>500</div>
<div class="c r" style="left:1791.2px;top:633.16px;width:137.7px"><span class="t">▲</span>5.3%</div>
<div class="c" style="left:2111px;top:633.16px;width:320.4px;width:318px">販売管理システムからの出力資料「売掛金残高一覧表」より作成</div>
<div class="c" style="left:166.4px;top:662.83px;width:284.1px">M株式会社</div>
<div class="c" style="left:456.1px;top:662.83px;width:378.5px">月末締め翌月末払い（振込100%）</div>
<div class="c" style="left:840.2px;top:662.83px;width:45.2px;left:844.2px">千円</div>
<div class="c r" style="left:886.4px;top:662.83px;width:137.9px">8,500</div>
<div class="c r" style="left:1029.2px;top:662.83px;width:137.9px">7,500</div>
<div class="c r" style="left:1172px;top:662.83px;width:137.9px">9,500</div>
<div class="c r" style="left:1457.4px;top:662.83px;width:137.7px">9,500</div>
<div class="c r" style="left:1648.6px;top:662.83px;width:137.7px">2,000</div>
<div class="c r" style="left:1791.2px;top:662.83px;width:137.7px">26.7%</div>
<div class="c" style="left:2111px;top:662.83px;width:320.4px;width:318px">販売管理システムからの出力資料「売掛金残高一覧表」より作成</div>
<div class="c" style="left:166.4px;top:692.5px;width:284.1px">N株式会社</div>
<div class="c" style="left:456.1px;top:692.5px;width:378.5px">月末締め翌月末払い（振込100%）</div>
<div class="c" style="left:840.2px;top:692.5px;width:45.2px;left:844.2px">千円</div>
<div class="c r" style="left:886.4px;top:692.5px;width:137.9px">5,400</div>
<div class="c r" style="left:1029.2px;top:692.5px;width:137.9px">5,500</div>
<div class="c r" style="left:1172px;top:692.5px;width:137.9px">5,700</div>
<div class="c r" style="left:1457.4px;top:692.5px;width:137.7px">5,700</div>
<div class="c r" style="left:1648.6px;top:692.5px;width:137.7px">200</div>
<div class="c r" style="left:1791.2px;top:692.5px;width:137.7px">3.6%</div>
<div class="c" style="left:2111px;top:692.5px;width:320.4px;width:318px">販売管理システムからの出力資料「売掛金残高一覧表」より作成</div>
<div class="c" style="left:166.4px;top:722.17px;width:284.1px">0株式会社</div>
<div class="c" style="left:456.1px;top:722.17px;width:378.5px">月末締め翌月末払い（振込100%）</div>
<div class="c" style="left:840.2px;top:722.17px;width:45.2px;left:844.2px">千円</div>
<div class="c r" style="left:886.4px;top:722.17px;width:137.9px">3,500</div>
<div class="c r" style="left:1029.2px;top:722.17px;width:137.9px">3,510</div>
<div class="c r" style="left:1172px;top:722.17px;width:137.9px">3,400</div>
<div class="c r" style="left:1457.4px;top:722.17px;width:137.7px">3,400</div>
<div class="c r" style="left:1648.6px;top:722.17px;width:137.7px"><span class="t">▲</span>110</div>
<div class="c r" style="left:1791.2px;top:722.17px;width:137.7px"><span class="t">▲</span>3.1%</div>
<div class="c" style="left:2111px;top:722.17px;width:320.4px;width:318px">販売管理システムからの出力資料「売掛金残高一覧表」より作成</div>
<div class="c" style="left:166.4px;top:751.85px;width:284.1px">その他（100万円以下）</div>
<div class="c" style="left:456.1px;top:751.85px;width:378.5px">月末締め翌月末払い（振込100%）</div>
<div class="c" style="left:840.2px;top:751.85px;width:45.2px;left:844.2px">千円</div>
<div class="c r" style="left:886.4px;top:751.85px;width:137.9px">11,506</div>
<div class="c r" style="left:1029.2px;top:751.85px;width:137.9px">12,817</div>
<div class="c r" style="left:1172px;top:751.85px;width:137.9px">2,206</div>
<div class="c r" style="left:1457.4px;top:751.85px;width:137.7px">2,206</div>
<div class="c r" style="left:1648.6px;top:751.85px;width:137.7px"><span class="t">▲</span>10,612</div>
<div class="c r" style="left:1791.2px;top:751.85px;width:137.7px"><span class="t">▲</span>82.8%</div>
<div class="c" style="left:2111px;top:751.85px;width:320.4px;width:318px">販売管理システムからの出力資料「売掛金残高一覧表」より作成</div>
<div class="c" style="left:132.6px;top:811.19px;width:317.9px">受取手形</div>
<div class="c" style="left:840.2px;top:811.19px;width:45.2px;left:844.2px">千円</div>
<div class="c r" style="left:886.4px;top:811.19px;width:137.9px">749,300</div>
<div class="c r" style="left:1029.2px;top:811.19px;width:137.9px">749,200</div>
<div class="c r" style="left:1172px;top:811.19px;width:137.9px">754,300</div>
<div class="c" style="left:166.4px;top:840.86px;width:284.1px">A株式会社</div>
<div class="c" style="left:840.2px;top:840.86px;width:45.2px;left:844.2px">千円</div>
<div class="c r" style="left:886.4px;top:840.86px;width:137.9px">440,000</div>
<div class="c r" style="left:1029.2px;top:840.86px;width:137.9px">460,000</div>
<div class="c r" style="left:1172px;top:840.86px;width:137.9px">450,000</div>
<div class="c r" style="left:1457.4px;top:840.86px;width:137.7px">450,000</div>
<div class="c r" style="left:1648.6px;top:840.86px;width:137.7px"><span class="t">▲</span>10,000</div>
<div class="c r" style="left:1791.2px;top:840.86px;width:137.7px"><span class="t">▲</span>2.2%</div>
<div class="c" style="left:166.4px;top:870.53px;width:284.1px">B株式会社</div>
<div class="c" style="left:840.2px;top:870.53px;width:45.2px;left:844.2px">千円</div>
<div class="c r" style="left:886.4px;top:870.53px;width:137.9px">110,000</div>
<div class="c r" style="left:1029.2px;top:870.53px;width:137.9px">90,000</div>
<div class="c r" style="left:1172px;top:870.53px;width:137.9px">100,000</div>
<div class="c r" style="left:1457.4px;top:870.53px;width:137.7px">100,000</div>
<div class="c r" style="left:1648.6px;top:870.53px;width:137.7px">10,000</div>
<div class="c r" style="left:1791.2px;top:870.53px;width:137.7px">11.1%</div>
<div class="c" style="left:166.4px;top:900.21px;width:284.1px">C株式会社</div>
<div class="c" style="left:840.2px;top:900.21px;width:45.2px;left:844.2px">千円</div>
<div class="c r" style="left:886.4px;top:900.21px;width:137.9px">28,000</div>
<div class="c r" style="left:1029.2px;top:900.21px;width:137.9px">29,000</div>
<div class="c r" style="left:1172px;top:900.21px;width:137.9px">30,000</div>
<div class="c r" style="left:1457.4px;top:900.21px;width:137.7px">30,000</div>
<div class="c r" style="left:1648.6px;top:900.21px;width:137.7px">1,000</div>
<div class="c r" style="left:1791.2px;top:900.21px;width:137.7px">3.4%</div>
<div class="c" style="left:166.4px;top:929.88px;width:284.1px">D株式会社</div>
<div class="c" style="left:840.2px;top:929.88px;width:45.2px;left:844.2px">千円</div>
<div class="c r" style="left:886.4px;top:929.88px;width:137.9px">36,500</div>
<div class="c r" style="left:1029.2px;top:929.88px;width:137.9px">36,000</div>
<div class="c r" style="left:1172px;top:929.88px;width:137.9px">37,500</div>
<div class="c r" style="left:1457.4px;top:929.88px;width:137.7px">37,500</div>
<div class="c r" style="left:1648.6px;top:929.88px;width:137.7px">1,500</div>
<div class="c r" style="left:1791.2px;top:929.88px;width:137.7px">4.2%</div>
<div class="c" style="left:166.4px;top:959.55px;width:284.1px">E株式会社</div>
<div class="c" style="left:840.2px;top:959.55px;width:45.2px;left:844.2px">千円</div>
<div class="c r" style="left:886.4px;top:959.55px;width:137.9px">31,450</div>
<div class="c r" style="left:1029.2px;top:959.55px;width:137.9px">32,450</div>
<div class="c r" style="left:1172px;top:959.55px;width:137.9px">33,450</div>
<div class="c r" style="left:1457.4px;top:959.55px;width:137.7px">33,450</div>
<div class="c r" style="left:1648.6px;top:959.55px;width:137.7px">1,000</div>
<div class="c r" style="left:1791.2px;top:959.55px;width:137.7px">3.1%</div>
<div class="c" style="left:166.4px;top:989.22px;width:284.1px">F株式会社</div>
<div class="c" style="left:840.2px;top:989.22px;width:45.2px;left:844.2px">千円</div>
<div class="c r" style="left:886.4px;top:989.22px;width:137.9px">30,500</div>
<div class="c r" style="left:1029.2px;top:989.22px;width:137.9px">31,000</div>
<div class="c r" style="left:1172px;top:989.22px;width:137.9px">30,000</div>
<div class="c r" style="left:1457.4px;top:989.22px;width:137.7px">30,000</div>
<div class="c r" style="left:1648.6px;top:989.22px;width:137.7px"><span class="t">▲</span>1,000</div>
<div class="c r" style="left:1791.2px;top:989.22px;width:137.7px"><span class="t">▲</span>3.2%</div>
<div class="c" style="left:166.4px;top:1018.89px;width:284.1px">G株式会社</div>
<div class="c" style="left:840.2px;top:1018.89px;width:45.2px;left:844.2px">千円</div>
<div class="c r" style="left:886.4px;top:1018.89px;width:137.9px">29,000</div>
<div class="c r" style="left:1029.2px;top:1018.89px;width:137.9px">27,500</div>
<div class="c r" style="left:1172px;top:1018.89px;width:137.9px">28,500</div>
<div class="c r" style="left:1457.4px;top:1018.89px;width:137.7px">28,500</div>
<div class="c r" style="left:1648.6px;top:1018.89px;width:137.7px">1,000</div>
<div class="c r" style="left:1791.2px;top:1018.89px;width:137.7px">3.6%</div>
<div class="c" style="left:166.4px;top:1048.57px;width:284.1px">H株式会社</div>
<div class="c" style="left:840.2px;top:1048.57px;width:45.2px;left:844.2px">千円</div>
<div class="c r" style="left:886.4px;top:1048.57px;width:137.9px">21,250</div>
<div class="c r" style="left:1029.2px;top:1048.57px;width:137.9px">22,250</div>
<div class="c r" style="left:1172px;top:1048.57px;width:137.9px">23,250</div>
<div class="c r" style="left:1457.4px;top:1048.57px;width:137.7px">23,250</div>
<div class="c r" style="left:1648.6px;top:1048.57px;width:137.7px">1,000</div>
<div class="c r" style="left:1791.2px;top:1048.57px;width:137.7px">4.5%</div>
<div class="c" style="left:166.4px;top:1078.24px;width:284.1px">I株式会社</div>
<div class="c" style="left:840.2px;top:1078.24px;width:45.2px;left:844.2px">千円</div>
<div class="c r" style="left:886.4px;top:1078.24px;width:137.9px">22,600</div>
<div class="c r" style="left:1029.2px;top:1078.24px;width:137.9px">21,000</div>
<div class="c r" style="left:1172px;top:1078.24px;width:137.9px">21,600</div>
<div class="c r" style="left:1457.4px;top:1078.24px;width:137.7px">21,600</div>
<div class="c r" style="left:1648.6px;top:1078.24px;width:137.7px">600</div>
<div class="c r" style="left:1791.2px;top:1078.24px;width:137.7px">2.9%</div>
<div class="c" style="left:2111px;top:929.88px;width:137px">4月</div>
<div class="c" style="left:2253.6px;top:929.88px;width:137.2px">5月</div>
<div class="c" style="left:2396.4px;top:929.88px;width:35px">6月</div>
<div class="c" style="left:1938.4px;top:959.55px;width:167px">A株式会社</div>
<div class="c r" style="left:2106.4px;top:959.55px;width:137.7px">300,000</div>
<div class="c r" style="left:2249px;top:959.55px;width:137.9px">300,000</div>
<div class="c" style="left:1938.4px;top:989.22px;width:167px">B株式会社</div>
<div class="c r" style="left:2106.4px;top:989.22px;width:137.7px">100,000</div>
<div class="c r" style="left:2249px;top:989.22px;width:137.9px">100,000</div>
<div class="c" style="left:1938.4px;top:1018.89px;width:167px">C株式会社</div>
<div class="c r" style="left:2106.4px;top:1018.89px;width:137.7px">30,000</div>
<div class="c r" style="left:2249px;top:1018.89px;width:137.9px">30,000</div>
<div class="c" style="left:1938.4px;top:1048.57px;width:167px">D株式会社</div>
<div class="c r" style="left:2106.4px;top:1048.57px;width:137.7px">25,000</div>
<div class="c r" style="left:2249px;top:1048.57px;width:137.9px">25,000</div>
<div class="c" style="left:1938.4px;top:1078.24px;width:167px">E株式会社</div>
<div class="c r" style="left:2106.4px;top:1078.24px;width:137.7px">22,300</div>
<div class="c r" style="left:2249px;top:1078.24px;width:137.9px">22,300</div>
<div class="c" style="left:1938.4px;top:1107.91px;width:167px">F株式会社</div>
<div class="c r" style="left:2106.4px;top:1107.91px;width:137.7px">20,000</div>
<div class="c r" style="left:2249px;top:1107.91px;width:137.9px">20,000</div>
<div class="c" style="left:1938.4px;top:1137.58px;width:167px">G株式会社</div>
<div class="c r" style="left:2106.4px;top:1137.58px;width:137.7px">19,000</div>
<div class="c r" style="left:2249px;top:1137.58px;width:137.9px">19,000</div>
<div class="c" style="left:1938.4px;top:1167.25px;width:167px">H株式会社</div>
<div class="c r" style="left:2106.4px;top:1167.25px;width:137.7px">15,500</div>
<div class="c r" style="left:2249px;top:1167.25px;width:137.9px">15,500</div>
<div class="c" style="left:1938.4px;top:1196.93px;width:167px">I株式会社</div>
<div class="c r" style="left:2106.4px;top:1196.93px;width:137.7px">14,400</div>
<div class="c r" style="left:2249px;top:1196.93px;width:137.9px">14,400</div>
<div class="c" style="left:132.6px;top:1167.25px;width:317.9px">出所：勘定内訳書</div>
<div class="c" style="left:1938.4px;top:1256.27px;width:167px">A株式会社</div>
<div class="c" style="left:1938.4px;top:1285.94px;width:167px">B株式会社</div>
<div class="c" style="left:1938.4px;top:1315.61px;width:167px">C株式会社</div>
<div class="c" style="left:1938.4px;top:1345.29px;width:167px">D株式会社</div>
<svg style="left:0;top:0" width="2449" height="1440" viewBox="0 0 2449 1440"><rect x="162.5" y="839.5" width="32.05" height="28.1" fill="none" stroke="#1a6ddc" stroke-width="2.6"/></svg>
<svg style="left:1279px;top:956.8px" width="16.7" height="28.1" viewBox="0 0 16 27"><path d="M1.5 1.5 V20.5 L5.9 16.4 L9.2 24.3 L12.3 23 L9 15.2 H14.8 Z" fill="#000" stroke="#fff" stroke-width="1.4" stroke-linejoin="round"/></svg>
</div></div>
<div class="abs" style="left:2432.4px;top:182px;width:16.6px;height:1202px;background:#fff;border-left:1.4px solid #e1e2e3"></div>
<div class="abs" style="left:2433.2px;top:182px;width:15.8px;height:34.4px;background:#f8f9fa;border-bottom:1.4px solid #c4c7c5"></div>
<div class="abs" style="left:2435px;top:222.5px;width:12px;height:39px;border-radius:6px;background:#dadce0"></div>
<div class="abs" style="left:2433.2px;top:1322px;width:15.8px;height:22px;background:#f8f9fa;border:1.2px solid #e4e5e7"></div>
<div class="abs" style="left:2433.2px;top:1344.6px;width:15.8px;height:22px;background:#f8f9fa;border:1.2px solid #e4e5e7"></div>
<svg style="left:2436.6px;top:1330px" width="9" height="5" viewBox="0 0 10 5"><path d="M0 5 L5 0 L10 5Z" fill="#80868b"/></svg>
<svg style="left:2436.6px;top:1353px" width="9" height="5" viewBox="0 0 10 5"><path d="M0 0 L5 5 L10 0Z" fill="#80868b"/></svg>
<div class="abs" style="left:2433.2px;top:1368px;width:15.8px;height:15.6px;background:#f8f9fa"></div>
<div class="abs" style="left:0;top:1368px;width:58.5px;height:16px;background:#f8f9fa"></div>
<div class="abs" style="left:58.5px;top:1368px;width:2.2px;height:16px;background:#c6c8ca"></div>
<div class="abs" style="left:60.4px;top:1368px;width:2372px;height:16px;background:#fff"></div>
<div class="abs" style="left:62px;top:1369.4px;width:1314px;height:12.2px;border-radius:6.1px;background:#dadce0"></div>
<div class="abs" style="left:2387.6px;top:1368px;width:22.4px;height:16px;background:#f8f9fa;border:1.2px solid #e4e5e7"></div>
<div class="abs" style="left:2410px;top:1368px;width:22.4px;height:16px;background:#f8f9fa;border:1.2px solid #e4e5e7"></div>
<svg style="left:2396px;top:1371.6px" width="5" height="9" viewBox="0 0 5 10"><path d="M5 0 L0 5 L5 10Z" fill="#80868b"/></svg>
<svg style="left:2419px;top:1371.6px" width="5" height="9" viewBox="0 0 5 10"><path d="M0 0 L5 5 L0 10Z" fill="#80868b"/></svg>
<div class="abs" style="left:0;top:1383.6px;width:2449px;height:56.4px;background:#f1f3f4"></div>
<div class="abs" style="left:0;top:1383.6px;width:2449px;height:1.2px;background:#e3e5e8"></div>
<div class="abs" style="left:451.4px;top:1383.6px;width:152.4px;height:56.4px;background:#fff;box-shadow:0 1px 3px rgba(60,64,67,.25)"></div>
<svg style="left:67.2px;top:1403.7px" width="14.2" height="14.2" viewBox="0 0 14.2 14.2"><path d="M7.1 0 V14.2 M0 7.1 H14.2" stroke="#5f6368" stroke-width="2.9" fill="none"/></svg>
<svg style="left:109.6px;top:1403px" width="18.2" height="15.8" viewBox="0 0 18.2 15.8"><path d="M0 1.45 H18.2 M0 5.75 H18.2 M0 10.05 H18.2 M0 14.35 H18.2" stroke="#5f6368" stroke-width="2.9" fill="none"/></svg>
<div class="abs" style="left:183.6px;top:1396px;font-size:19.8px;line-height:28px;color:#5f6368;-webkit-text-stroke:.15px #5f6368;white-space:nowrap">シート1</div>
<svg style="left:257.90px;top:1398.70px" width="25.40" height="25.40" viewBox="0 0 24 24"><path d="M7 10l5 5 5-5z" fill="#5f6368"/></svg>
<div class="abs" style="left:323.2px;top:1396px;font-size:19.8px;line-height:28px;color:#5f6368;-webkit-text-stroke:.15px #5f6368;white-space:nowrap">現金預金</div>
<svg style="left:409.10px;top:1398.70px" width="25.40" height="25.40" viewBox="0 0 24 24"><path d="M7 10l5 5 5-5z" fill="#5f6368"/></svg>
<div class="abs" style="left:475px;top:1396px;font-size:19.8px;line-height:28px;color:#188038;-webkit-text-stroke:.15px #188038;white-space:nowrap">売上債権</div>
<svg style="left:561.90px;top:1398.70px" width="25.40" height="25.40" viewBox="0 0 24 24"><path d="M7 10l5 5 5-5z" fill="#188038"/></svg>
<div class="abs" style="left:160.8px;top:1384.8px;width:1.4px;height:55.2px;background:#e8eaed"></div>
<div class="abs" style="left:300.2px;top:1384.8px;width:1.4px;height:55.2px;background:#e8eaed"></div>
<div class="abs" style="left:2218px;top:1391.4px;width:143.6px;height:40.4px;border:1.4px solid #dadce0;border-radius:5.6px;background:#fff"></div>
<div class="abs" style="left:2227.6px;top:1399px;font-size:15.1px;line-height:24px;color:#3c4043;-webkit-text-stroke:.2px #3c4043;white-space:nowrap">合計: 1,350,000</div>
<svg style="left:2333.70px;top:1399.30px" width="25.40" height="25.40" viewBox="0 0 24 24"><path d="M7 10l5 5 5-5z" fill="#5f6368"/></svg>
<svg style="left:2395px;top:1399px" width="25.6" height="30" viewBox="0 0 25.6 30"><path d="M2.4 0 H23.2 a2.4 2.4 0 0 1 2.4 2.4 V22.6 a2.4 2.4 0 0 1 -2.4 2.4 H17 L12.8 29.2 L8.6 25 H2.4 a2.4 2.4 0 0 1 -2.4 -2.4 V2.4 a2.4 2.4 0 0 1 2.4 -2.4z" fill="#5f6368"/><path d="M12.8 3.800 C13.5 9.400 15.900 11.800 21.500 12.5 C15.900 13.200 13.5 15.600 12.8 21.200 C12.100 15.600 9.700 13.200 4.100 12.5 C9.700 11.800 12.100 9.400 12.8 3.800z" fill="#fff"/></svg>
<div class="abs" style="left:2449px;top:92.6px;width:79px;height:1347.4px;background:#fff;border-left:1.4px solid #dadce0"></div>
<svg style="left:2475.6px;top:119.6px" width="26.6" height="26.6" viewBox="0 0 26.6 26.6"><path d="M0 2.6 A2.6 2.6 0 0 1 2.6 0 H20.4 V6.2 H6.2 V20.4 H0z" fill="#4285f4"/><path d="M20.4 0 H24 A2.6 2.6 0 0 1 26.6 2.600 V6.2 H20.4z" fill="#1967d2"/><path d="M20.4 6.2 H26.6 V20.4 H20.4z" fill="#fbbc04"/><path d="M6.2 20.4 H20.4 V26.6 H6.2z" fill="#34a853"/><path d="M0 20.4 H6.2 V26.6 H2.6 A2.6 2.6 0 0 1 0 24z" fill="#188038"/><path d="M20.4 20.4 H26.6 L20.4 26.6z" fill="#ea4335"/><rect x="6.2" y="6.2" width="14.2" height="14.2" fill="#fff"/><text x="13.3" y="17.4" font-family="Liberation Sans,sans-serif" font-size="10.6" font-weight="bold" fill="#4285f4" text-anchor="middle" letter-spacing="-.5">31</text></svg>
<svg style="left:2476px;top:198.6px" width="26.6" height="26.6" viewBox="0 0 26.6 26.6"><rect x="0" y="0" width="26.6" height="26.6" rx="2.4" fill="#fbbc04"/><circle cx="13.3" cy="11.2" r="5.2" fill="#fff"/><rect x="10.4" y="14.6" width="5.8" height="3.4" fill="#fff"/><rect x="10.4" y="19.4" width="5.8" height="1.9" fill="#fff"/></svg>
<svg style="left:2476px;top:277.8px" width="26.6" height="26.6" viewBox="0 0 26.6 26.6"><circle cx="13.3" cy="13.3" r="13.3" fill="#2f6fde"/><path d="M10 19 L19.6 9.2" stroke="#fff" stroke-width="4.4" stroke-linecap="round" fill="none"/><circle cx="6.4" cy="13.6" r="2.4" fill="#fbbc04"/></svg>
<svg style="left:2474.30px;top:1386.10px" width="28.20" height="28.20" viewBox="0 0 24 24"><path d="M10 6L8.59 7.41 13.17 12l-4.58 4.59L10 18l6-6z" fill="#444746"/></svg>
<svg style="left:0;top:1432px" width="8" height="8" viewBox="0 0 16 16"><path d="M0 0 V16 H16 A16 16 0 0 1 0 0z" fill="#000"/></svg>
<svg style="left:2520px;top:1432px" width="8" height="8" viewBox="0 0 16 16"><path d="M16 0 V16 H0 A16 16 0 0 0 16 0z" fill="#000"/></svg>
</div></body></html>
